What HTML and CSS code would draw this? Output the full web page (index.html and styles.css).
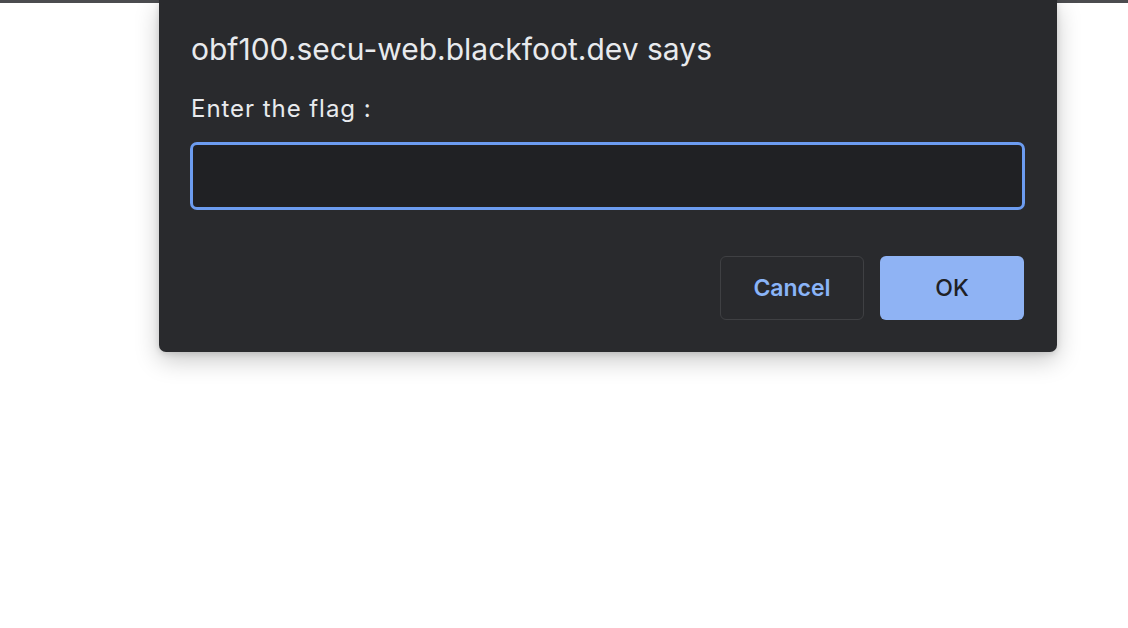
FILE: index.html
```html
<!DOCTYPE html>
<html>
<head>
<meta charset="utf-8">
<link rel="stylesheet" href="styles.css">
</head>
<body>
<div class="topbar"></div>
<div class="dialog">
  <div class="title">obf100.secu-web.blackfoot.dev says</div>
  <div class="label">Enter the flag :</div>
  <div class="input"></div>
  <div class="actions">
    <button class="btn cancel">Cancel</button>
    <button class="btn ok">OK</button>
  </div>
</div>
</body>
</html>
```
FILE: styles.css
```css
html, body {
  margin: 0;
  padding: 0;
  background: #ffffff;
  width: 1128px;
  height: 628px;
  overflow: hidden;
  font-family: Inter, "Noto Sans", sans-serif;
}
.topbar {
  height: 3px;
  background: #4b4c4f;
}
.dialog {
  position: absolute;
  left: 159px;
  top: 0;
  width: 898px;
  height: 352px;
  box-sizing: border-box;
  background: #292a2d;
  border-radius: 0 0 7px 7px;
  box-shadow: 0 8px 24px rgba(0,0,0,0.22), 0 2px 6px rgba(0,0,0,0.12);
  padding: 31px 33px 0 32px;
  display: flex;
  flex-direction: column;
}
.title {
  color: #e8eaed;
  font-size: 30px;
  letter-spacing: 0;
  line-height: 36px;
  height: 36px;
  white-space: nowrap;
}
.label {
  color: #e8eaed;
  font-size: 24px;
  letter-spacing: 0.95px;
  line-height: 28px;
  margin-top: 28px;
  white-space: nowrap;
}
.input {
  margin-top: 19px;
  margin-left: -1px;
  height: 68px;
  width: 835px;
  box-sizing: border-box;
  border: 3px solid #6c9cf0;
  border-radius: 7px;
  background: #202124;
}
.actions {
  display: flex;
  justify-content: flex-end;
  gap: 16px;
  margin-top: 46px;
}
.btn {
  width: 144px;
  height: 64px;
  border-radius: 6px;
  font-family: Inter, "Noto Sans", sans-serif;
  font-size: 23px;
  font-weight: 500;
  cursor: default;
  padding: 0;
}
.cancel {
  background: transparent;
  border: 1px solid #3f4043;
  color: #8ab4f8;
  font-weight: 600;
}
.ok {
  background: #8fb3f4;
  border: none;
  color: #202124;
}
```
